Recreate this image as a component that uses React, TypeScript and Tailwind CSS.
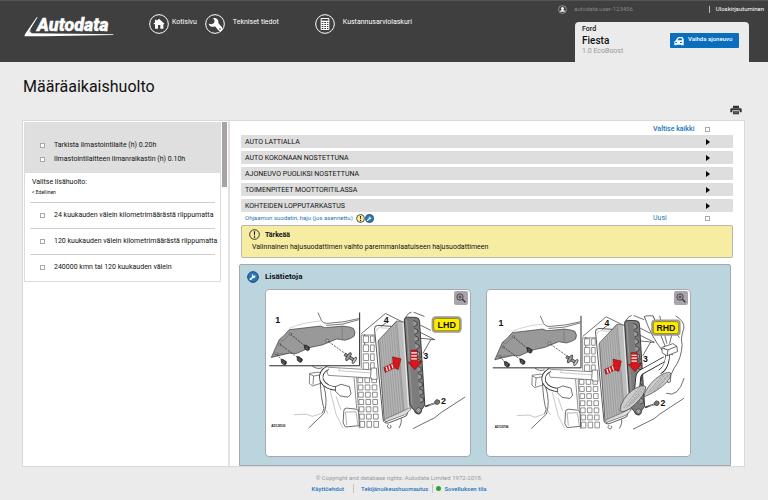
import React from "react";

const font = "font-['Roboto','Liberation_Sans',sans-serif]";
const box =
  "block size-[5px] shrink-0 appearance-none rounded-none border border-[#a9a9a9] bg-white checked:bg-[#0a6ebd]";

function Logo() {
  return (
    <svg viewBox="0 0 270 60" className="h-[20px] w-[90px] overflow-visible" role="img" aria-label="Autodata">
      <path d="M41 1 L21 34 Q15 46 24 49 L268 52 L268 54 L60 58 L2 58 Q0 56 4 50 L38 1Z" fill="#fff" />
      <path d="M41 4 L14 47" stroke="#3f3f3f" strokeWidth="1" fill="none" />
      <text
        x="39"
        y="41"
        fill="#fff"
        stroke="#fff"
        strokeWidth="1"
        fontSize="54"
        fontWeight="900"
        fontStyle="italic"
        fontFamily="Roboto, 'Liberation Sans', sans-serif"
      >
        Autodata
      </text>
    </svg>
  );
}

function HomeIcon() {
  return (
    <svg viewBox="0 0 60 60" className="size-5 shrink-0" aria-hidden="true">
      <circle cx="30" cy="30" r="28" fill="none" stroke="#fff" strokeWidth="3" />
      <path d="M30 14 L47 30 L43 31 V44 H34 V33 H27 V44 H18 V31 L13 30 L18 25 V17 H23 V20Z" fill="#fff" />
    </svg>
  );
}

function WrenchIcon() {
  return (
    <svg viewBox="0 0 60 60" className="size-5 shrink-0" aria-hidden="true">
      <circle cx="30" cy="30" r="28" fill="none" stroke="#fff" strokeWidth="3" />
      <path
        d="M24 12 C34 10 42 17 40 27 L51 40 Q54 46 50 50 Q45 54 40 49 L30 37 C22 41 12 37 11 29 L20 31 L27 27 L29 20Z"
        fill="#fff"
      />
      <circle cx="45" cy="45" r="2.5" fill="#3f3f3f" />
    </svg>
  );
}

function CalculatorIcon() {
  return (
    <svg viewBox="0 0 60 60" className="size-5 shrink-0" aria-hidden="true">
      <circle cx="30" cy="30" r="28" fill="none" stroke="#fff" strokeWidth="3" />
      <rect x="17" y="12" width="26" height="36" rx="2" fill="#fff" />
      <path d="M20 15H40V20H20Z" fill="#3f3f3f" />
      {[24, 30, 36, 42].map((y) => (
        <path key={y} d={`M20 ${y}h5v3h-5z M28 ${y}h5v3h-5z M36 ${y}h4v3h-4z`} fill="#3f3f3f" />
      ))}
    </svg>
  );
}

function Alert({ className, fill }: { className: string; fill: string }) {
  return (
    <svg viewBox="0 0 24 24" className={className} aria-hidden="true">
      <circle cx="12" cy="12" r="10.5" fill={fill} stroke="#222" strokeWidth="2" />
      <path d="M10.5 5h3l-.6 9h-1.8z M10.6 16h2.8v3h-2.8z" fill="#222" />
    </svg>
  );
}

function Info({ className }: { className: string }) {
  return (
    <svg viewBox="0 0 24 24" className={className} aria-hidden="true">
      <circle cx="12" cy="12" r="10.7" fill="#1f78c4" stroke="#2b4358" strokeWidth="2" />
      <path
        d="M12 5 L12 9 L14 10 L16 8 Q18 12 15 14 L12 14 L8 18 Q6 19 5 17 Q5 16 6 15 L10 12 Q9 7 12 5Z"
        fill="#fff"
      />
    </svg>
  );
}

function Clip({ x, y }: { x: number; y: number }) {
  return (
    <g transform={`translate(${x} ${y}) rotate(25)`}>
      <path d="M-10 -4 L-4 -6 L8 -4 L10 3 L6 8 L-4 6Z" fill="#333" stroke="#111" strokeWidth="1.5" />
      <path d="M-5 -2 L5 1 M-3 3 L5 5" stroke="#999" strokeWidth="1.5" />
    </g>
  );
}

function Pedals() {
  return (
    <g transform="translate(-8.8 -12.3) scale(1.0246)" strokeLinejoin="round">
      <path d="M494 94 L510 118 L560 200 L580 210 M520 92 L553 182 M540 92 L562 176" fill="none" stroke="#222" strokeWidth="2" />
      <path d="M501 92 L520 92 L556 182 L546 194 Q512 150 494 94Z" fill="#fff" stroke="#222" strokeWidth="2" />
      <path d="M472 312 L475 280 Q476 266 490 259 L556 222" fill="none" stroke="#222" strokeWidth="17" />
      <path d="M472 314 L475 280 Q476 266 490 259 L558 221" fill="none" stroke="#fff" strokeWidth="12" />
      <path d="M540 262 Q565 248 564 202" fill="none" stroke="#222" strokeWidth="14" />
      <path d="M538 263 Q565 248 564 200" fill="none" stroke="#fff" strokeWidth="10" />
      <path d="M546 188 L580 176 L592 184 L594 200 L562 213 L548 204Z M548 190 L565 195 L592 184 M565 195 L563 212" fill="#fff" stroke="#222" strokeWidth="2" />
      <path
        d="M588 92 Q617 110 613 130 Q602 162 608 178 Q606 222 584 250 Q570 270 572 292 L565 294 Q560 284 566 276 M560 326 Q596 340 614 280 M590 145 L600 158 M578 144 L570 176"
        fill="none"
        stroke="#222"
        strokeWidth="2"
      />
      <path d="M492 337 Q497 310 528 282 Q558 259 572 264 Q578 272 562 292 Q532 322 492 337Z" fill="#ccc" stroke="#333" strokeWidth="2" />
      <path d="M420 378 Q424 344 456 318 Q486 297 498 306 Q499 320 480 344 Q452 377 428 382Z" fill="#ccc" stroke="#333" strokeWidth="2" />
      <path
        d="M504 325 L550 270 M512 323 L558 268 M522 320 L566 268 M532 313 L571 268 M432 370 L480 307 M440 369 L488 306 M448 364 L494 308 M458 356 L497 313"
        stroke="#777"
        strokeWidth="2"
        strokeDasharray="4 2"
      />
    </g>
  );
}

/* Cabin filter housing, with the trim panel inset at the upper left. */
function FilterDrawing({ side, code, viewBox }: { side: string; code: string; viewBox: string }) {
  const lattice: React.ReactNode[] = [];
  for (let r = 0; r < 4; r++)
    for (let c = 0; c < 2; c++)
      lattice.push(<rect key={`a${r}${c}`} x={312 + c * 22} y={153 + r * 27} width={c ? 11 : 16} height={20} />);
  for (let r = 0; r < 7; r++)
    for (let c = 0; c < 3; c++)
      lattice.push(
        <rect key={`b${r}${c}`} x={296 + c * 21 + r} y={279 + r * 22} width={14} height={r === 6 ? 18 : 15} />
      );
  return (
    <svg viewBox={viewBox} className="block w-full" role="img" aria-label={`Suodattimen vaihto ${side}`}>
      <g fill="none" stroke="#222" strokeWidth="2" strokeLinejoin="round">
        <path d="M306 146 L379 85 L434 112 M316 180 V148 M360 165 L413 108" />
        <path d="M440 96 L450 84 L458 81 M464 81 L497 94 M484 120 L516 136 M484 142 L528 164 L516 164 L492 206 M486 160 L518 163" />
        <path d="M462 433 L528 400 L545 386 L620 337" />
        <path d="M306 150 H352 M306 150 V250 M292 275 L300 432 M284 278 L292 372" stroke="#555" />
        <g fill="#fff" stroke="#555" strokeWidth="2">
          {lattice}
        </g>
        <path d="M198 247 L350 256 L352 281 L206 272 Z" fill="#fff" stroke="#555" />
        <path d="M240 250 L238 258 L340 265" stroke="#aaa" />
        <path d="M336 250 H352 L354 284 H338 L334 276Z" fill="#fff" stroke="#444" />
        <path d="M150 266 L178 262 L186 270 L184 296 L158 304 L149 296Z M150 268 L162 274 L186 270 M162 274 L160 300" fill="#fff" stroke="#444" />
        <path d="M158 244 Q176 256 188 248 M182 290 Q184 342 193 372 L188 386 M192 302 Q206 350 194 386 L147 431" />
        <path d="M102 391 L140 389 L158 396 L188 386 M190 362 L206 388 M212 318 L230 390 L250 430 M230 336 L244 376" stroke="#aaa" />
        <path d="M205 249 Q180 262 186 286 Q198 312 236 312" strokeWidth="13" stroke="#333" />
        <path d="M205 249 Q180 262 186 286 Q198 312 238 312" strokeWidth="8" stroke="#fff" />
        <path d="M228 306 L245 299 L270 306 L275 328 L266 338 L242 334 L228 320Z" fill="#fff" />
        <path d="M253 380 Q253 371 262 371 L290 374 Q298 376 298 384 L300 424 L258 428 L251 416Z" fill="#fff" />
        <path d="M258 383 L290 382 L296 424 M258 383 L262 422" stroke="#888" />
        <path d="M426 402 Q430 412 420 431 M388 420 Q380 430 392 432 Q400 430 394 422" />
      </g>

      <g strokeLinejoin="round">
        <path
          d="M346 132 Q345 122 356 121 L400 124 L440 116 L446 384 Q446 396 434 398 L388 416 Q374 418 372 406Z"
          fill="#fff"
          stroke="#333"
          strokeWidth="2.5"
        />
        <path d="M352 138 Q352 128 360 128 L392 130 M355 170 L377 400" fill="none" stroke="#999" strokeWidth="1.5" />
        <path d="M358 166 L413 108 L438 112 L456 372 L440 388 L380 412 L375 406Z" fill="#b4b4b4" stroke="#333" strokeWidth="2" />
        <path d="M413 108 L438 112 L456 372 L436 388Z" fill="#bcbcbc" stroke="#777" strokeWidth="1.5" />
        <path d="M432 113 L449 377" stroke="#eee" strokeWidth="3" />
        {[0, 1, 2, 3, 4, 5, 6, 7].map((i) => (
          <path key={i} d={`M${363 + i * 6.5} ${163 - i * 6.5} L${384 + i * 7} ${406 - i * 2.7}`} stroke="#858585" strokeWidth="1.5" />
        ))}
        <path d="M375 406 L424 384 L452 370 L456 375 L440 390 L380 412Z" fill="#ddd" stroke="#444" strokeWidth="1.5" />
        <path
          d="M436 104 Q436 96 446 96 L472 97 Q481 98 482 108 L498 362 L488 376 Q488 389 478 389 Q468 388 466 378 L453 362Z"
          fill="#7c7c7c"
          stroke="#222"
          strokeWidth="2.5"
        />
        <path d="M443 104 L459 360" stroke="#999" strokeWidth="3" />
        {Array.from({ length: 11 }, (_, i) => (
          <path
            key={i}
            d={`M${463 + i * 2} ${106 + i * 23} l11 5 l1 9 l-11 5`}
            fill="#999"
            stroke="#222"
            strokeWidth="2"
          />
        ))}
        <circle cx="479" cy="378" r="8" fill="#bbb" stroke="#222" strokeWidth="2" />
        <circle cx="479" cy="379" r="3" fill="#fff" stroke="#222" strokeWidth="1.5" />
        <path d="M499 366 L528 356" stroke="#333" strokeWidth="5" />
        <path d="M510 363 L528 356" stroke="#aaa" strokeWidth="3" />
        <path d="M528 350 L534 345 L542 348 L543 355 L537 360 L529 358Z" fill="#777" stroke="#222" strokeWidth="2" />
        <path d="M382 112 L366 124 M490 214 L480 220" stroke="#222" strokeWidth="2" />
      </g>

      <g>
        <rect x="28" y="80" width="273" height="163" fill="#fff" />
        <path d="M28 243 H301 V82" fill="none" stroke="#222" strokeWidth="3" />
        <path d="M175 82 L186 107 Q190 114 202 115 L254 110 L300 100 M200 121 L250 117 L298 104" fill="none" stroke="#333" strokeWidth="2" />
        <path d="M88 130 Q130 112 186 107" fill="none" stroke="#bbb" strokeWidth="2" />
        <path
          d="M34 218 L58 164 L72 152 L88 134 L182 123 L196 128 L250 123 L270 126 L282 130 Q291 142 284 154 Q274 162 256 166 L232 162 L188 180 L150 188 L110 206 L88 205 L50 214Z"
          fill="#999"
          stroke="#333"
          strokeWidth="2"
          strokeLinejoin="round"
        />
        <path d="M248 126 L249 162 M40 208 L88 205 M58 164 L70 168 L92 144" stroke="#666" strokeWidth="1.5" fill="none" />
        <g fill="#aaa" stroke="#444" strokeWidth="1.5">
          <circle cx="92" cy="147" r="4" />
          <circle cx="60" cy="178" r="4" />
          <circle cx="50" cy="208" r="4" />
          <circle cx="203" cy="167" r="5" />
        </g>
        <path
          d="M92 147 L136 184 M60 178 L114 218 M50 208 L68 228 M207 170 L260 208"
          stroke="#222"
          strokeWidth="2"
          strokeDasharray="7 3"
        />
        <Clip x={141} y={188} />
        <Clip x={119} y={223} />
        <Clip x={71} y={231} />
        <g transform="translate(268 216) rotate(32)" fill="#999" stroke="#222" strokeWidth="2">
          <rect x="-14" y="-4" width="36" height="8" />
          <ellipse cx="-1" cy="0" rx="5" ry="14" />
          <ellipse cx="20" cy="0" rx="4" ry="11" fill="#ccc" />
        </g>
      </g>

      {side === "RHD" && <Pedals />}

      <g stroke="#5e0a0a" strokeWidth="1.5" strokeLinejoin="round">
        <path d="M374 248 L402 235 L400 216 L426 222 L418 254 L406 250 L378 263Z" fill="#d8161b" />
        <path d="M456 196 H475 V229 H490 L468 255 L447 232 H456Z" fill="#d8161b" />
      </g>
      <path d="M381 246 L385 259 M389 242 L393 255 M398 238 L402 251 M457 204 H474 M457 213 H474 M457 222 H474" stroke="#fff" strokeWidth="3.5" />

      <rect x="521" y="96" width="86" height="45" rx="10" fill="#ffec00" stroke="#999" strokeWidth="5" />
      <rect x="525" y="100" width="78" height="37" rx="7" fill="none" stroke="#333" strokeWidth="1.5" />
      <g fontFamily="'Liberation Sans', sans-serif" fontWeight="700" fill="#111">
        <text x="564" y="128" fontSize="27" textAnchor="middle">
          {side}
        </text>
        <g fontSize="27">
          <text x="46" y="113">1</text>
          <text x="374" y="114">4</text>
          <text x="493" y="224">3</text>
          <text x="547" y="360">2</text>
        </g>
        <text x="34" y="429" fontSize="9">
          {code}
        </text>
      </g>
    </svg>
  );
}

function Figure({ side, code, viewBox }: { side: string; code: string; viewBox: string }) {
  return (
    <div className="relative min-w-0 flex-1 overflow-hidden rounded-[4px] border border-[#aaa6b0] bg-white">
      <FilterDrawing side={side} code={code} viewBox={viewBox} />
      <button
        type="button"
        aria-label="Suurenna"
        className="absolute top-px right-[2px] flex size-[14px] items-center justify-center rounded-[2px] bg-[#aaa4ad]"
      >
        <svg viewBox="0 0 30 30" className="size-[10px]" fill="none" stroke="#333" strokeWidth="2.5">
          <circle cx="12" cy="12" r="9.5" />
          <path d="M12 7V17M7 12H17" />
          <path d="M19 19L28 28" strokeWidth="4" />
        </svg>
      </button>
    </div>
  );
}

const sections = [
  "AUTO LATTIALLA",
  "AUTO KOKONAAN NOSTETTUNA",
  "AJONEUVO PUOLIKSI NOSTETTUNA",
  "TOIMENPITEET MOOTTORITILASSA",
  "KOHTEIDEN LOPPUTARKASTUS",
];

const services = [
  "24 kuukauden välein kilometrimäärästä riippumatta",
  "120 kuukauden välein kilometrimäärästä riippumatta",
  "240000 kmn tai 120 kuukauden välein",
];

export default function App() {
  return (
    <div className={`min-h-screen bg-[#ebebeb] text-[7px] leading-[10px] text-[#111] ${font}`}>
      <header className="flex h-[62px] border-t border-[#555] bg-[#3f3f3f] text-white">
        <div className="pt-4 pl-6">
          <Logo />
        </div>
        <nav className="flex items-start pt-[13px] pl-[35px]">
          <a href="#koti" className="flex gap-[3px]">
            <HomeIcon />
            <span className="pt-[3px]">Kotisivu</span>
          </a>
          <a href="#tiedot" className="ml-2 flex gap-2">
            <WrenchIcon />
            <span className="pt-[3px]">Tekniset tiedot</span>
          </a>
          <a href="#laskuri" className="ml-9 flex gap-2">
            <CalculatorIcon />
            <span className="pt-[3px]">Kustannusarviolaskuri</span>
          </a>
        </nav>
        <div className="ml-auto flex w-[210px] flex-col justify-between">
          <div className="flex items-center pt-[3px] pr-1 text-[6px]">
            <svg viewBox="0 0 24 24" className="size-[9px]" aria-hidden="true">
              <circle cx="12" cy="12" r="10.5" fill="none" stroke="#aaa" strokeWidth="2" />
              <circle cx="12" cy="9" r="4" fill="#fff" />
              <path d="M5 18Q5 13 12 13T19 18Z" fill="#fff" />
            </svg>
            <span className="ml-[7px] text-[#858585]">autodata.user-123456</span>
            <a href="#ulos" className="ml-auto flex items-center gap-[6px]">
              <span className="h-[7px] w-px bg-[#bbb]" />
              Uloskirjautuminen
            </a>
          </div>
          <div className="mr-[19px] ml-[17px] flex h-10 justify-between rounded-t-[4px] bg-[#ebebeb] pt-[2px] pr-[10px] pl-[7px] text-[#111]">
            <div>
              <p className="font-medium">Ford</p>
              <p className="text-[10px] leading-[13px] font-medium">Fiesta</p>
              <p className="leading-[8px] text-[#999]">1.0 EcoBoost</p>
            </div>
            <button
              type="button"
              className="mt-[9px] flex h-[15px] w-[69px] gap-[4px] rounded-[1px] bg-[#0a6ebd] pt-px pl-[4px] text-left text-[6px] font-medium whitespace-nowrap text-white"
            >
              <svg viewBox="0 0 30 30" className="mt-[2px] size-[10px] shrink-0" fill="#fff" aria-hidden="true">
                <path d="M1 17L4 14L10 6Q11 3 15 3H25L29 9V28H22V26H7V28H1Z" />
                <path d="M14 7L10 13H25L23 7Z M4 18h5v3H4z M18 18h6v3h-6z" fill="#0a6ebd" />
              </svg>
              Vaihda ajoneuvo
            </button>
          </div>
        </div>
      </header>

      <main className="pr-[23px] pl-[22px]">
        <h1 className="pt-[14px] pl-px text-[16px] leading-[22px]">Määräaikaishuolto</h1>
        <div className="flex h-[22px] items-end justify-end pr-[3px] pb-[5px]">
          <button type="button" aria-label="Tulosta">
            <svg viewBox="0 0 36 30" className="h-[10px] w-[12px]" aria-hidden="true">
              <path d="M9 2H27V9H9Z M2 10H34Q36 13 35 22H29V16H7V22H1Q0 13 2 10Z M9 19H27V28H9Z" fill="#333" />
              <path d="M11 23H25" stroke="#aaa" strokeWidth="1.5" />
            </svg>
          </button>
        </div>

        <div className="flex border border-[#d9d9d9] bg-white">
          <aside className="flex w-[207px] shrink-0 items-start border-r-2 border-[#e2e2e2] pt-px pl-px">
            <div className="w-[197px] border border-t-0 border-[#dcdcdc] pb-px">
              <div className="flex h-[51px] flex-col justify-end gap-[4px] bg-[#dfdfdf] pb-[9px] pl-[15px]">
                <label className="flex items-center gap-[9px]">
                  <input type="checkbox" className={box} />
                  Tarkista ilmastointilaite (h) 0.20h
                </label>
                <label className="flex items-center gap-[9px]">
                  <input type="checkbox" className={box} />
                  Ilmastointilaitteen ilmanraikastin (h) 0.10h
                </label>
              </div>
              <p className="pt-[4px] pl-[7px]">Valitse lisähuolto:</p>
              <a href="#edellinen" className="block pb-[5px] pl-[7px] text-[5px]">
                &lt; Edellinen
              </a>
              {services.map((s) => (
                <label key={s} className="mr-[5px] ml-[5px] flex h-[26px] items-center gap-[9px] border-t border-[#cfcfcf] pb-px pl-[10px] whitespace-nowrap">
                  <input type="checkbox" className={box} />
                  {s}
                </label>
              ))}
            </div>
            <div className="ml-px h-[65px] w-[5px] bg-[#a9a1a8]" />
          </aside>

          <section className="min-w-0 flex-1 pt-[3px] pr-[11px] pl-[11px]">
            <label className="flex items-center justify-end pr-[23px] pb-px text-[#1c75bc]">
              <span className="w-[52px] font-medium">Valtise kaikki</span>
              <input type="checkbox" className={box} />
            </label>
            <div className="flex flex-col gap-[3px]">
              {sections.map((s) => (
                <button key={s} type="button" className="flex h-[13px] items-center justify-between bg-[#dedede] pr-[23px] pl-[4px] text-left">
                  {s}
                  <svg viewBox="0 0 4 6" className="h-[6px] w-[4px]" aria-hidden="true">
                    <path d="M0 0L4 3L0 6Z" fill="#000" />
                  </svg>
                </button>
              ))}
            </div>
            <div className="flex h-[13px] items-center pr-[23px] pb-px pl-[4px] text-[#1c75bc]">
              <a href="#ohjaamo" className="mr-[3px] text-[6px]">
                Ohjaamon suodatin, haju (jos asennettu)
              </a>
              <Alert className="size-[9px]" fill="#f6eda2" />
              <Info className="size-[9px]" />
              <label className="ml-auto flex items-center">
                <span className="w-[52px]">Uusi</span>
                <input type="checkbox" className={box} />
              </label>
            </div>
            <div className="h-[33px] rounded-[2px] border border-[#b9b4b0] bg-[#f6eda2] pt-[3px] pl-[7px]">
              <h2 className="flex items-center gap-[5px] font-bold">
                <Alert className="size-[11px]" fill="none" />
                Tärkeää
              </h2>
              <p className="pt-[2px] pl-[3px]">Valinnainen hajusuodattimen vaihto paremmanlaatuiseen hajusuodattimeen</p>
            </div>
            <div className="mt-[6px] mr-[2px] -ml-[2px] rounded-t-[2px] border border-[#aaa6b0] bg-[#bbd5df] pr-[39px] pb-[8px] pl-[25px]">
              <h2 className="-ml-[18px] flex h-6 items-center gap-[6px] text-[8px] font-bold">
                <Info className="size-[12px]" />
                Lisätietoja
              </h2>
              <div className="flex gap-[15px]">
                <Figure side="LHD" code="AD128100" viewBox="18 14 615 501" />
                <Figure side="RHD" code="AD118784" viewBox="10 2 630 513" />
              </div>
            </div>
          </section>
        </div>
      </main>

      <footer className="flex flex-col items-center gap-px pt-[6px] pl-[30px] text-[6px]">
        <p className="text-[#999]">© Copyright and database rights: Autodata Limited 1972-2018.</p>
        <div className="flex items-center font-medium text-[#1c75bc]">
          <a href="#ehdot">Käyttöehdot</a>
          <span className="mr-[7px] ml-[9px] h-[9px] w-px bg-[#c4c4c4]" />
          <a href="#tekijanoikeus">Tekijänoikeushuomautus</a>
          <span className="mr-[3px] ml-[4px] h-[9px] w-px bg-[#c4c4c4]" />
          <span className="mr-[3px] size-[5px] rounded-full bg-[#2aa52f]" />
          <a href="#tila">Sovelluksen tila</a>
        </div>
      </footer>
    </div>
  );
}
